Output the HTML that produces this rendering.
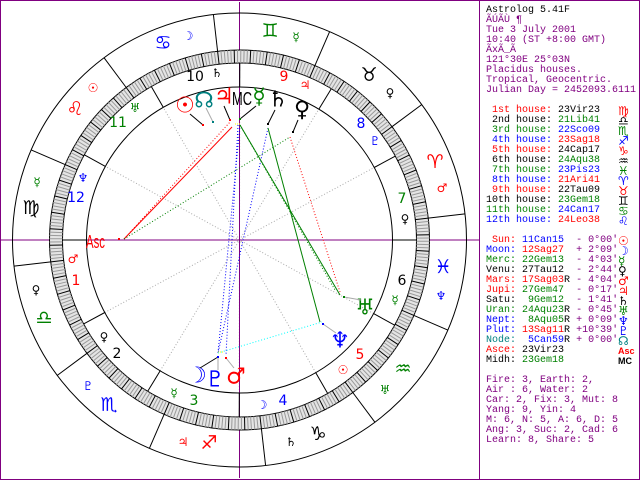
<!DOCTYPE html>
<html><head><meta charset="utf-8"><style>
html,body{margin:0;padding:0;background:#fff;width:640px;height:480px;overflow:hidden}
#w{position:absolute;left:0;top:0}
pre{position:absolute;left:486px;top:6px;margin:0;font:10px/10px "Liberation Mono","DejaVu Sans Mono",monospace;color:#000;letter-spacing:0}
.p{color:#800080}.r{color:#f00}.g{color:#008000}.b{color:#00f}.k{color:#000}.t{color:#008080}
.gl{position:absolute;left:618px;font:12px/10px "DejaVu Sans",sans-serif}
</style></head><body>
<svg id="w" width="640" height="480" xmlns="http://www.w3.org/2000/svg" font-family="DejaVu Sans,sans-serif">
<rect x="0.5" y="0.5" width="639" height="479" fill="none" stroke="#800080"/>
<line x1="479.5" y1="0" x2="479.5" y2="480" stroke="#800080"/>
<g id="g"></g>
</svg>
<pre><span class="k">Astrolog 5.41F</span>
<span class="p">ÃÚÃÙ ¶
Tue 3 July 2001
10:40 (ST +8:00 GMT)
ÃxÃ_Ã
121°30E 25°03N
Placidus houses.
Tropical, Geocentric.
Julian Day = 2452093.6111</span>

<span class="r"> 1st house:</span> <span class="k">23Vir23</span>
<span class="k"> 2nd house:</span> <span class="g">21Lib41</span>
<span class="g"> 3rd house:</span> <span class="b">22Sco09</span>
<span class="b"> 4th house:</span> <span class="r">23Sag18</span>
<span class="r"> 5th house:</span> <span class="k">24Cap17</span>
<span class="k"> 6th house:</span> <span class="g">24Aqu38</span>
<span class="g"> 7th house:</span> <span class="b">23Pis23</span>
<span class="b"> 8th house:</span> <span class="r">21Ari41</span>
<span class="r"> 9th house:</span> <span class="k">22Tau09</span>
<span class="k">10th house:</span> <span class="g">23Gem18</span>
<span class="g">11th house:</span> <span class="b">24Can17</span>
<span class="b">12th house:</span> <span class="r">24Leo38</span>

<span class="r"> Sun:</span> <span class="b">11Can15</span>  <span class="p">- 0°00'</span>
<span class="b">Moon:</span> <span class="r">12Sag27</span>  <span class="p">+ 2°09'</span>
<span class="g">Merc:</span> <span class="g">22Gem13</span>  <span class="p">- 4°03'</span>
<span class="k">Venu:</span> <span class="k">27Tau12</span>  <span class="p">- 2°44'</span>
<span class="r">Mars:</span> <span class="r">17Sag03</span>R <span class="p">- 4°04'</span>
<span class="r">Jupi:</span> <span class="g">27Gem47</span>  <span class="p">- 0°17'</span>
<span class="k">Satu:</span>  <span class="g">9Gem12</span>  <span class="p">- 1°41'</span>
<span class="g">Uran:</span> <span class="g">24Aqu23</span>R <span class="p">- 0°45'</span>
<span class="b">Nept:</span>  <span class="g">8Aqu05</span>R <span class="p">+ 0°09'</span>
<span class="b">Plut:</span> <span class="r">13Sag11</span>R <span class="p">+10°39'</span>
<span class="t">Node:</span>  <span class="b">5Can59</span>R <span class="p">+ 0°00'</span>
<span class="r">Asce:</span> <span class="k">23Vir23</span>
<span class="k">Midh:</span> <span class="g">23Gem18</span>

<span class="p">Fire: 3, Earth: 2,
Air : 6, Water: 2
Car: 2, Fix: 3, Mut: 8
Yang: 9, Yin: 4
M: 6, N: 5, A: 6, D: 5
Ang: 3, Suc: 2, Cad: 6
Learn: 8, Share: 5</span></pre>
<div class="gl r" style="top:106px">♍</div>
<div class="gl k" style="top:116px">♎</div>
<div class="gl g" style="top:126px">♏</div>
<div class="gl b" style="top:136px">♐</div>
<div class="gl r" style="top:146px">♑</div>
<div class="gl k" style="top:156px">♒</div>
<div class="gl g" style="top:166px">♓</div>
<div class="gl b" style="top:176px">♈</div>
<div class="gl r" style="top:186px">♉</div>
<div class="gl k" style="top:196px">♊</div>
<div class="gl g" style="top:206px">♋</div>
<div class="gl b" style="top:216px">♌</div>
<div class="gl r" style="top:236px">☉</div>
<div class="gl b" style="top:246px">☽</div>
<div class="gl g" style="top:256px">☿</div>
<div class="gl k" style="top:266px">♀</div>
<div class="gl r" style="top:276px">♂</div>
<div class="gl r" style="top:286px">♃</div>
<div class="gl k" style="top:296px">♄</div>
<div class="gl g" style="top:306px">♅</div>
<div class="gl b" style="top:316px">♆</div>
<div class="gl b" style="top:326px">♇</div>
<div class="gl t" style="top:336px">☊</div>
<div class="gl r" style="top:346px;font:bold 9px 'Liberation Sans Narrow','Liberation Sans',sans-serif">Asc</div>
<div class="gl k" style="top:356px;font:bold 9px 'Liberation Sans Narrow','Liberation Sans',sans-serif">MC</div>
<script>
var cx=239.5,cy=240,A=173.39,s='';
function P(L,r){var t=(180+L-A)*Math.PI/180;return [cx+r*Math.cos(t),cy-r*Math.sin(t)];}
function ln(a,b,c,w,d){s+='<line x1="'+a[0].toFixed(1)+'" y1="'+a[1].toFixed(1)+'" x2="'+b[0].toFixed(1)+'" y2="'+b[1].toFixed(1)+'" stroke="'+c+'" stroke-width="'+(w||1)+'"'+(d?' stroke-dasharray="'+d+'"':'')+'/>';}
var H=[173.39,201.68,232.15,263.3,293.28,324.63];
H.forEach(function(h){ln(P(h,153),P(h+180,153),'#aaa',1,'1 2');});
s+='<line x1="0" y1="240" x2="479" y2="240" stroke="#800080"/><line x1="239.5" y1="2" x2="239.5" y2="478" stroke="#800080"/>';
s+='<circle cx="'+cx+'" cy="'+cy+'" r="227" fill="none" stroke="#000"/>';
s+='<circle cx="'+cx+'" cy="'+cy+'" r="183.5" fill="none" stroke="#e4e4e4" stroke-width="13"/>';
s+='<circle cx="'+cx+'" cy="'+cy+'" r="190" fill="none" stroke="#000"/>';
s+='<circle cx="'+cx+'" cy="'+cy+'" r="177" fill="none" stroke="#000"/>';
s+='<circle cx="'+cx+'" cy="'+cy+'" r="153" fill="none" stroke="#000"/>';
for(var d=0;d<360;d++){ln(P(d,177),P(d,190),d%5==0?'#000':'#999',1);}
for(var z=0;z<360;z+=30)ln(P(z,190),P(z,227),'#000');
H.forEach(function(h){ln(P(h,153),P(h,177),'#000');ln(P(h+180,153),P(h+180,177),'#000');});
function tx(x,y,t,c,f){s+='<text x="'+x+'" y="'+y+'" fill="'+c+'" font-size="'+(f||10)+'" text-anchor="middle" dominant-baseline="central">'+t+'</text>';}
var R='#f00',G='#008000',B='#00f',K='#000',T='#008080';
[[163,43,'♋',B],[188,36,'☽',B,12],[270,31,'♊',G],[296,37,'☿',G,12],[369,75,'♉',K],[390,93,'♀',K,12],[435,162,'♈',R],[442,188,'♂',R,12],[443,267,'♓',B],[441,296,'♆',B,12],[403,369,'♒',G],[385,390,'♅',G,12],[318,434,'♑',K],[291,442,'♄',K,12],[209,443,'♐',R],[183,442,'♃',R,12],[109,405,'♏',B],[88,386,'♇',B,12],[44,318,'♎',G],[36,290,'♀',K,12],[31,208,'♍',K],[37,182,'☿',G,12],[75,109,'♌',R],[93,88,'☉',R,12]
].forEach(function(a){tx(a[0],a[1],a[2],a[3],a[4]||19);});
[[195,77,'10',K],[217,73,'♄',K,12],[284,77,'9',R],[305,85,'♃',R,12],[361,124,'8',B],[375,141,'♇',B,12],[402,199,'7',G],[405,219,'♀',K,12],[402,281,'6',K],[395,300,'☿',G,12],[360,355,'5',R],[343,370,'☉',R,12],[283,401,'4',B],[262,405,'☽',B,12],[194,401,'3',G],[174,393,'☿',G,12],[117,354,'2',K],[104,337,'♀',K,12],[76,281,'1',R],[73,259,'♂',R,12],[76,198,'12',B],[83,178,'♆',B,12],[118,123,'11',G],[135,108,'♅',G,12]
].forEach(function(a){tx(a[0],a[1],a[2],a[3],a[4]||14);});
[[185,106,'☉',R],[204,101,'☊',T],[224,97,'♃',R],[278,100,'♄',K],[302,110,'♀',K],[259,97,'☿',G],[365,308,'♅',G],[340,341,'♆',B],[197,376,'☽',B],[215,380,'♇',B],[236,377,'♂',R]
].forEach(function(a){tx(a[0],a[1],a[2],a[3],22);});
s+='<text x="232" y="105" textLength="20" lengthAdjust="spacingAndGlyphs" fill="#000" font-size="18" font-family="Liberation Sans Narrow,Liberation Sans">MC</text>';
s+='<text x="86" y="248" textLength="19" lengthAdjust="spacingAndGlyphs" fill="#f00" font-size="18" font-family="Liberation Sans Narrow,Liberation Sans">Asc</text>';
[[[190,114],[203,125],K],[[206,108],[213,122],'#aaa'],[[224,106],[230,120],K],[[256,106],[240,119],K],[[275,110],[268,124],K],[[298,120],[293,132],K],[[361,300],[344,297],'#aaa'],[[336,333],[323,324],'#aaa'],[[200,368],[218,357],K],[[218,370],[218,357],'#aaa'],[[234,368],[226,358],'#aaa']].forEach(function(a){ln(a[0],a[1],a[2]);});
var a=[124,239];
ln(a,[232,127],R);ln(a,[230,122],R,1,'1 2');ln(a,[290,137],G,1,'1 2');
ln([240,125],[218,353],B,1,'1 2');ln([268,128],[218,353],B,1,'1 2');ln([238,125],[226,355],B,1,'1 2');
ln([240,125],[340,295],G);ln([240,125],[335,290],G,1,'1 2');ln([268,128],[320,322],G);
ln([290,137],[340,292],R,1,'1 2');ln([218,353],[322,322],'#0ff',1,'1 2');
ln([235,124],[240,124],'#ff0',1,'1 1');ln([218,352],[224,352],'#ff0',1,'1 1');
[[203,125,R],[213,122,T],[230,120,R],[240,119,G],[268,124,K],[293,132,K],[344,297,G],[323,324,B],[218,357,B],[226,358,R],[119,239,R]].forEach(function(p){s+='<rect x="'+(p[0]-1)+'" y="'+(p[1]-1)+'" width="2" height="2" fill="'+p[2]+'"/>';});
document.getElementById('g').innerHTML=s;
</script>
</body></html>
